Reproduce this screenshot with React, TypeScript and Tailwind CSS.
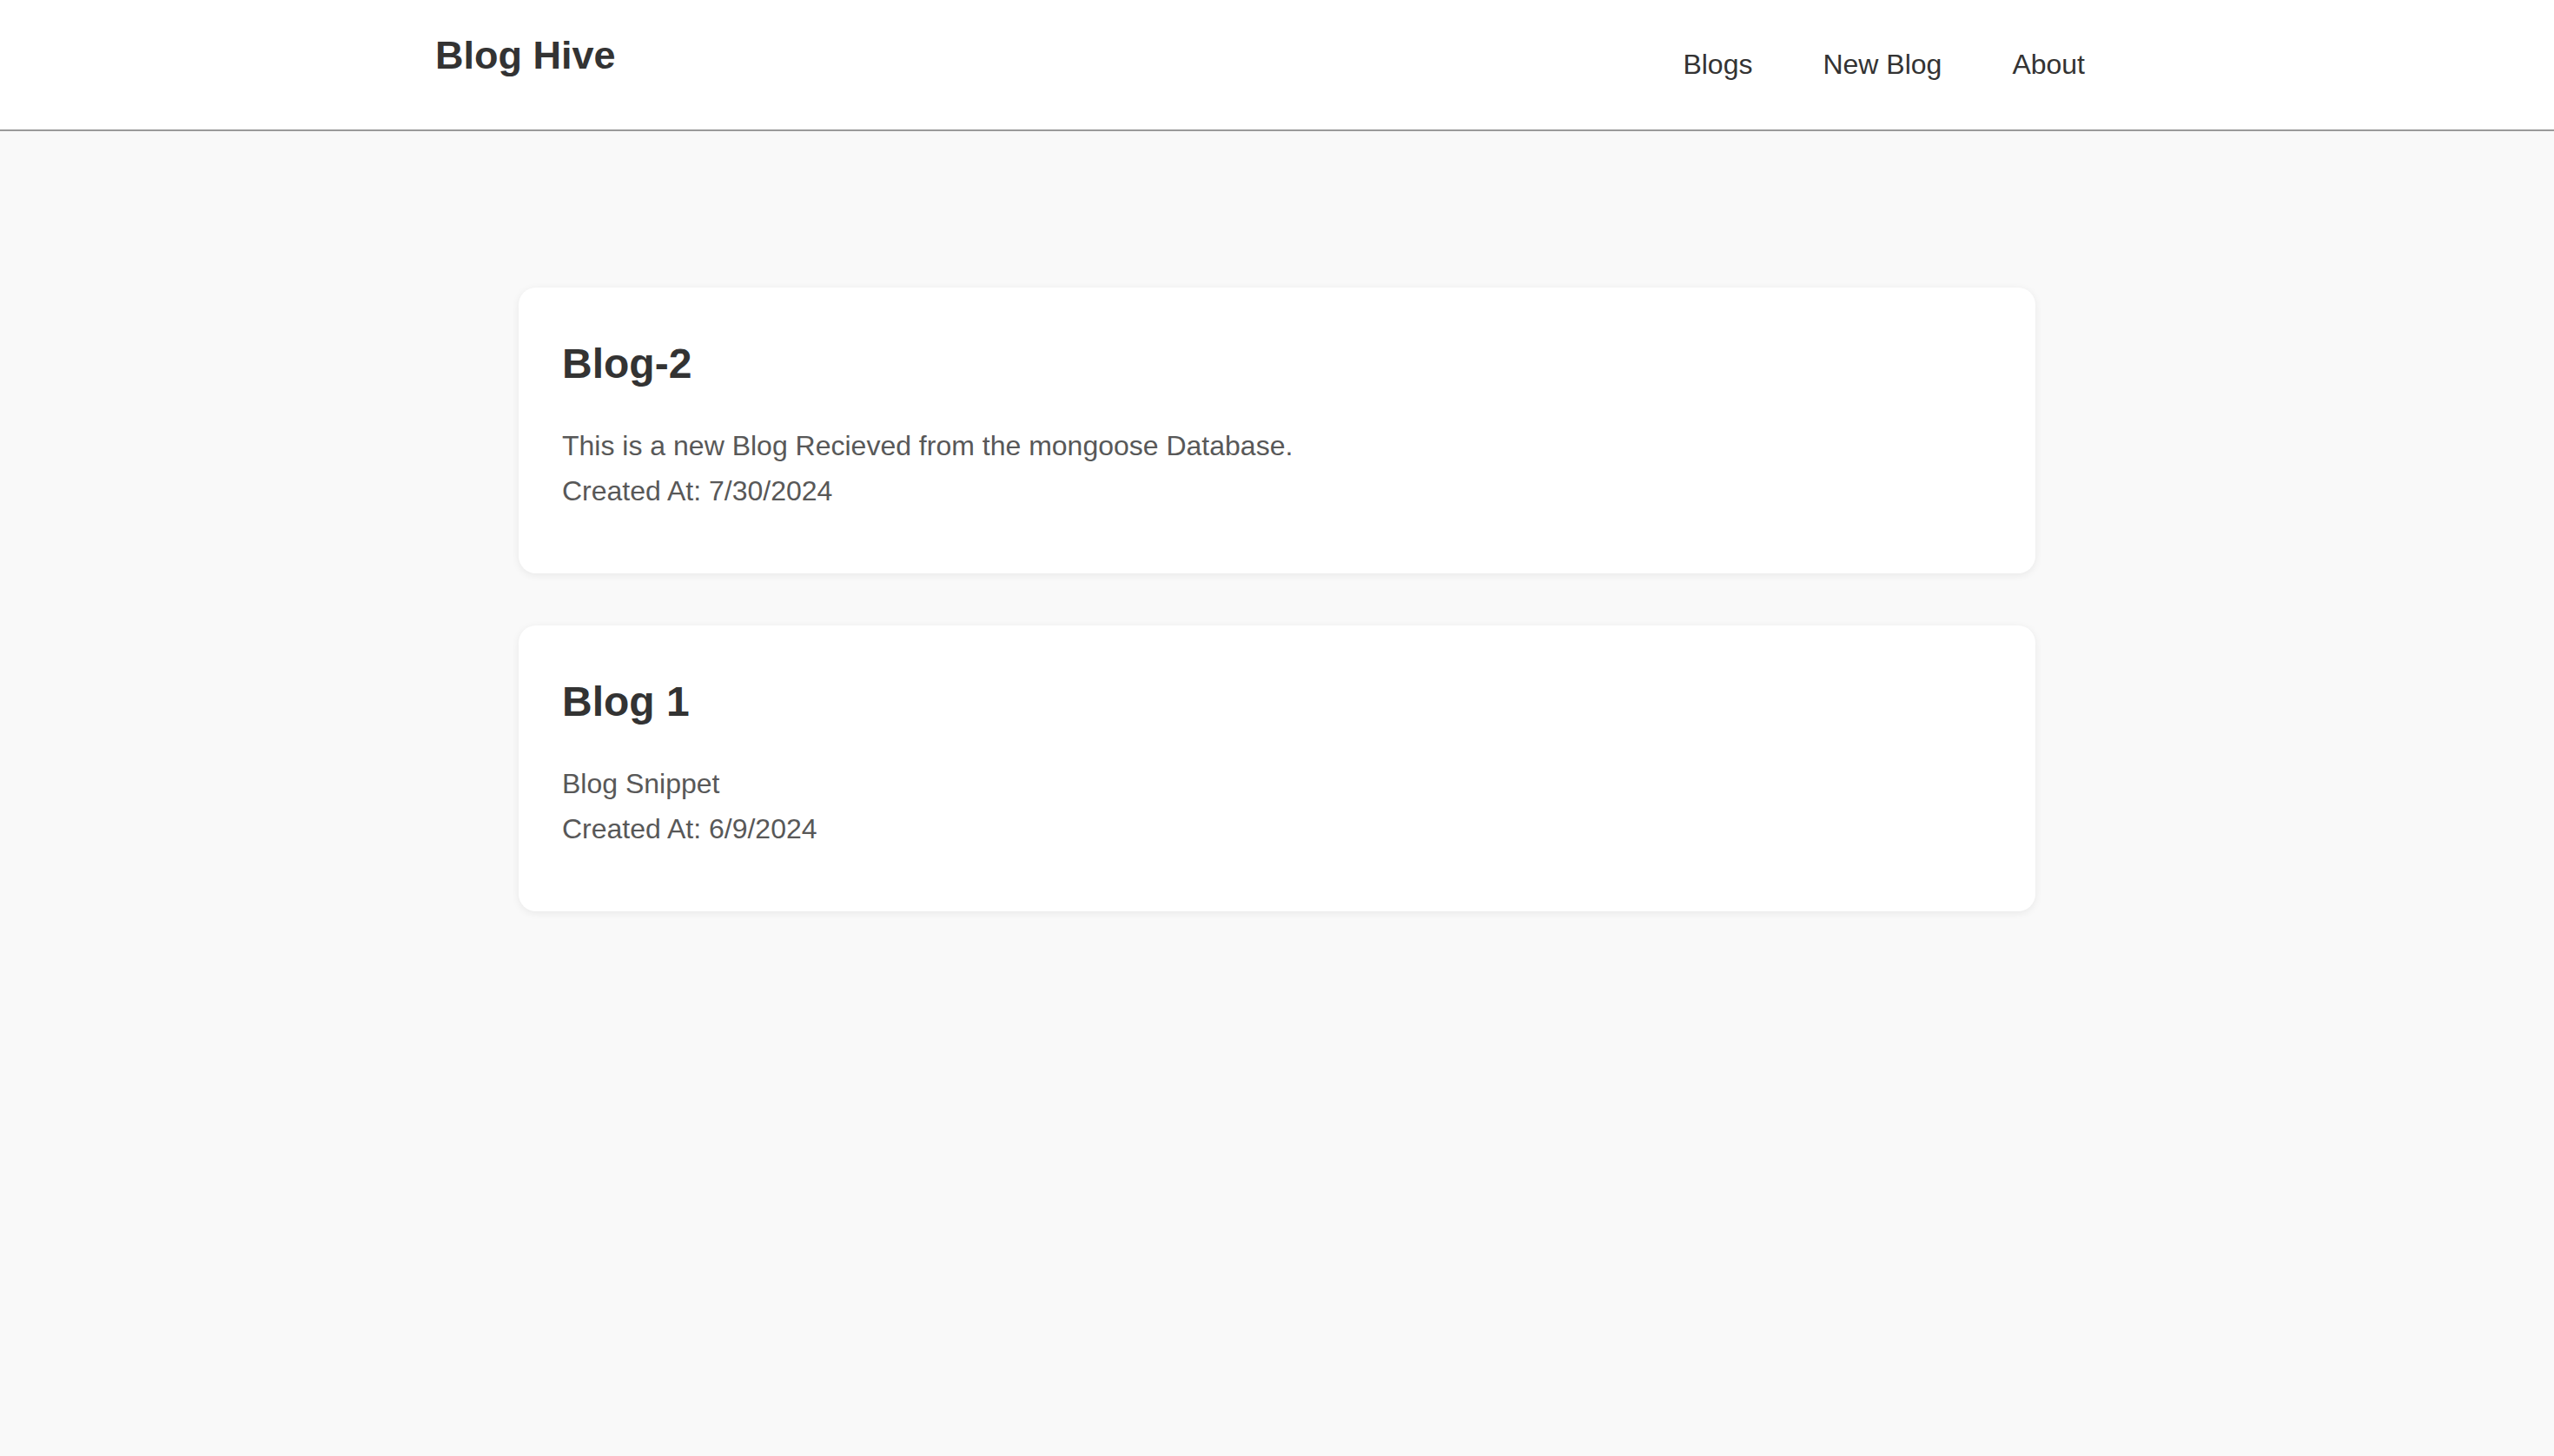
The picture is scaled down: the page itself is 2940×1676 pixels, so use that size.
const blogs = [
  {
    id: '2',
    title: 'Blog-2',
    snippet: 'This is a new Blog Recieved from the mongoose Database.',
    createdAt: '7/30/2024',
  },
  {
    id: '1',
    title: 'Blog 1',
    snippet: 'Blog Snippet',
    createdAt: '6/9/2024',
  },
]

const Navbar = () => {
  return (
    <nav className="flex h-[151px] items-start justify-between border-b-2 border-[#9a9a9a] bg-white pl-[501px] pr-[540px]">
      <h1 className="pt-[38px] text-[45px] leading-[52px] font-bold text-[#333]">
        Blog Hive
      </h1>
      <div className="flex gap-[81px] pt-[55px] text-[32px] leading-[38px] text-[#333]">
        <a href="/">Blogs</a>
        <a href="/create">New Blog</a>
        <a href="/about">About</a>
      </div>
    </nav>
  )
}

interface BlogCardProps {
  title: string
  snippet: string
  createdAt: string
}

const BlogCard = ({ title, snippet, createdAt }: BlogCardProps) => {
  return (
    <div className="rounded-[20px] bg-white pt-[60px] pr-[50px] pb-[69px] pl-[50px] shadow-[0_2px_10px_rgba(0,0,0,0.07)]">
      <h2 className="text-[48px] leading-[56px] font-bold text-[#333]">{title}</h2>
      <p className="mt-[40px] text-[32px] leading-[52px] text-[#585858]">{snippet}</p>
      <p className="text-[32px] leading-[52px] text-[#585858]">Created At: {createdAt}</p>
    </div>
  )
}

export default function App() {
  return (
    <div className="min-h-[1676px] bg-[#f9f9f9] font-['Liberation_Sans',Arial,sans-serif]">
      <Navbar />
      <main className="mx-auto flex w-[1746px] flex-col gap-[60px] pt-[180px]">
        {blogs.map((blog) => (
          <BlogCard key={blog.id} title={blog.title} snippet={blog.snippet} createdAt={blog.createdAt} />
        ))}
      </main>
    </div>
  )
}
